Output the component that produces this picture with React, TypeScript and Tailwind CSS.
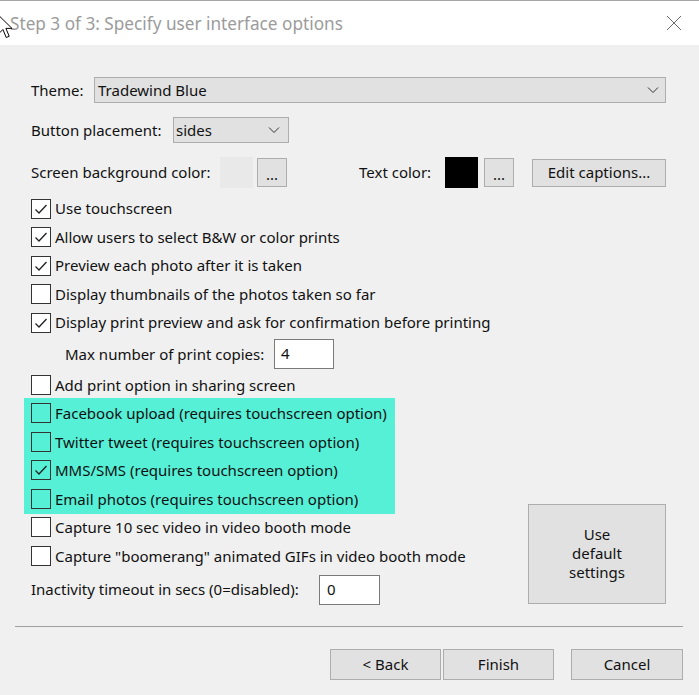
import React from 'react';

const FONT = { fontFamily: '"Noto Sans", "Open Sans", sans-serif' };

const Check: React.FC<{ checked?: boolean; label: string; clear?: boolean }> = ({ checked, label, clear }) => (
  <div className="flex items-center h-[28.5px]">
    <div
      className={`w-[20px] h-[20px] border border-[#333333] flex items-center justify-center shrink-0 ${
        clear ? 'bg-transparent' : 'bg-white'
      }`}
    >
      {checked && (
        <svg width="16" height="16" viewBox="0 0 16 16">
          <path d="M2.5 8.5 L6 12 L13.5 4" fill="none" stroke="#222" strokeWidth="1.3" />
        </svg>
      )}
    </div>
    <span className="ml-[4px] whitespace-nowrap">{label}</span>
  </div>
);

const Chevron: React.FC = () => (
  <svg width="12" height="8" viewBox="0 0 12 8">
    <path d="M1 1.5 L6 6.5 L11 1.5" fill="none" stroke="#333" strokeWidth="1" />
  </svg>
);

const WinButton: React.FC<{ className?: string; children: React.ReactNode }> = ({ className, children }) => (
  <div
    className={`bg-[#e1e1e1] border border-[#adadad] flex items-center justify-center text-center ${className ?? ''}`}
  >
    {children}
  </div>
);

export default function App() {
  return (
    <div
      className="relative w-[699px] h-[695px] bg-[#f0f0f0] overflow-hidden text-[15px] text-[#111] border-t border-[#a6a6a6]"
      style={FONT}
    >
      {/* title bar */}
      <div className="h-[44px] bg-white flex items-center pl-[10px] pr-[17px]">
        <span className="text-[17.2px] text-[#9b9b9b] mt-[1px]">Step 3 of 3: Specify user interface options</span>
        <svg className="ml-auto" width="16" height="16" viewBox="0 0 16 16">
          <path d="M1 1 L15 15 M15 1 L1 15" stroke="#6b6b6b" strokeWidth="1" />
        </svg>
      </div>

      {/* cursor */}
      <svg className="absolute left-[-3px] top-[13px]" width="18" height="26" viewBox="0 0 14 21">
        <path d="M1 1 L1 16 L4.5 12.5 L7.2 19 L9.6 18 L6.9 11.6 L11.8 11.6 Z" fill="white" stroke="black" strokeWidth="0.8" />
      </svg>

      <div className="pl-[31px] pr-[33px]">
        {/* theme */}
        <div className="flex items-center mt-[32px] h-[26px]">
          <span className="w-[63px]">Theme:</span>
          <div className="flex-1 h-[26px] bg-[#e1e1e1] border border-[#adadad] flex items-center pl-[3px] pr-[6px]">
            <span>Tradewind Blue</span>
            <span className="ml-auto">
              <Chevron />
            </span>
          </div>
        </div>

        {/* button placement */}
        <div className="flex items-center mt-[14px] h-[26px]">
          <span className="w-[142px] shrink-0">Button placement:</span>
          <div className="w-[116px] h-[26px] bg-[#e1e1e1] border border-[#adadad] flex items-center pl-[2px] pr-[8px]">
            <span>sides</span>
            <span className="ml-auto">
              <Chevron />
            </span>
          </div>
        </div>

        {/* colours */}
        <div className="flex items-center mt-[14px] h-[31px]">
          <span className="w-[189px] shrink-0 whitespace-nowrap">Screen background color:</span>
          <div className="w-[33px] h-[31px] bg-[#e9e9e9]" />
          <WinButton className="ml-[4px] w-[30px] h-[29px]">
            <span className="mt-[4px]">...</span>
          </WinButton>
          <span className="ml-[72px] w-[86px] shrink-0 whitespace-nowrap">Text color:</span>
          <div className="w-[33px] h-[31px] bg-black" />
          <WinButton className="ml-[6px] w-[30px] h-[29px]">
            <span className="mt-[4px]">...</span>
          </WinButton>
          <WinButton className="ml-[18px] w-[134px] h-[28px]">Edit captions...</WinButton>
        </div>

        {/* options */}
        <div className="mt-[6.25px]">
          <Check checked label="Use touchscreen" />
          <Check checked label="Allow users to select B&W or color prints" />
          <Check checked label="Preview each photo after it is taken" />
          <Check label="Display thumbnails of the photos taken so far" />
          <Check checked label="Display print preview and ask for confirmation before printing" />
          <div className="flex items-center h-[34px] pl-[34px]">
            <span className="w-[209px] shrink-0 whitespace-nowrap">Max number of print copies:</span>
            <div className="w-[60px] h-[30px] bg-white border border-[#7a7a7a] pl-[6px] pt-[2px]">4</div>
          </div>
          <Check label="Add print option in sharing screen" />
        </div>

        <div className="flex items-end justify-between">
          <div>
            <div className="-ml-[7px] pl-[7px] w-[371px] bg-[#56f0d7] -mt-[1.25px] py-[1px]">
              <Check clear label="Facebook upload (requires touchscreen option)" />
              <Check clear label="Twitter tweet (requires touchscreen option)" />
              <Check clear checked label="MMS/SMS (requires touchscreen option)" />
              <Check clear label="Email photos (requires touchscreen option)" />
            </div>
            <div className="-mt-[1px]">
              <Check label="Capture 10 sec video in video booth mode" />
              <Check label={'Capture "boomerang" animated GIFs in video booth mode'} />
            </div>
            <div className="flex items-center h-[30px] mt-[4.5px]">
              <span className="w-[288px] shrink-0 whitespace-nowrap">Inactivity timeout in secs (0=disabled):</span>
              <div className="w-[61px] h-[30px] bg-white border border-[#7a7a7a] pl-[7px] pt-[2px]">0</div>
            </div>
          </div>
          <WinButton className="w-[138px] h-[100px] mb-[1px]">
            <span className="leading-[19px]">
              Use
              <br />
              default
              <br />
              settings
            </span>
          </WinButton>
        </div>
      </div>

      {/* separator */}
      <div className="mt-[21px] ml-[15px] mr-[16px] h-px bg-[#a0a0a0]" />

      {/* nav buttons */}
      <div className="flex justify-end mt-[22px] pr-[16px]">
        <WinButton className="w-[111px] h-[31px]">&lt; Back</WinButton>
        <WinButton className="ml-[2px] w-[111px] h-[31px]">Finish</WinButton>
        <WinButton className="ml-[17px] w-[112px] h-[31px]">Cancel</WinButton>
      </div>
    </div>
  );
}
